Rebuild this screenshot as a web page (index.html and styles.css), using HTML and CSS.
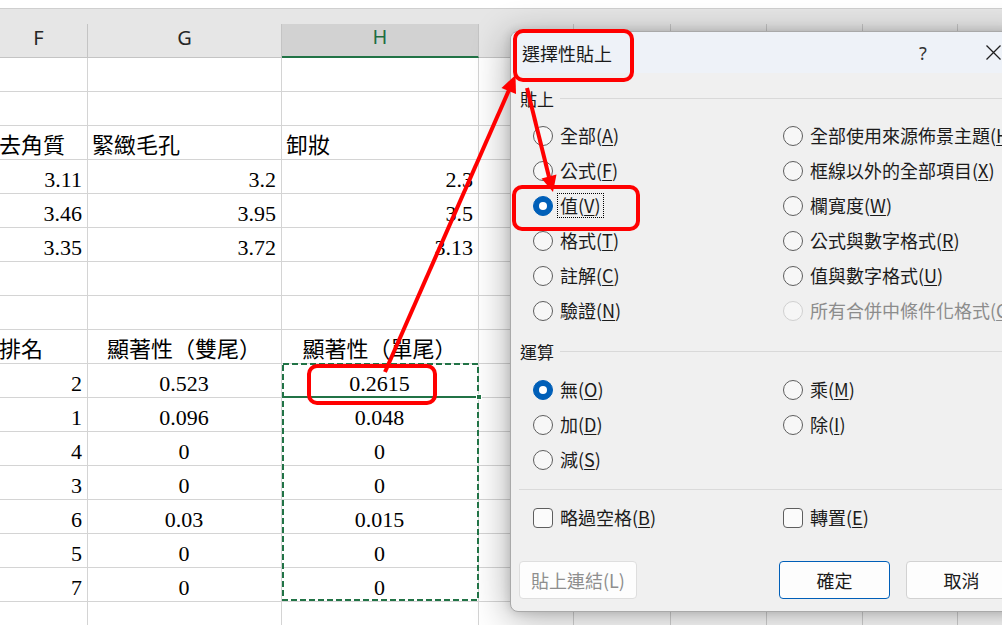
FILE: index.html
```html
<!DOCTYPE html>
<html lang="zh-Hant">
<head>
<meta charset="utf-8">
<title>選擇性貼上</title>
<link rel="stylesheet" href="styles.css">
</head>
<body>
<div class="screen">
  <div class="sheet">
    <div class="topgap"></div>
    <div class="strip"></div>
    <div class="row hdr"><div>F</div><div>G</div><div class="sel">H</div><div>I</div><div>J</div><div>K</div><div>L</div><div>M</div><div>N</div></div>
    <div class="row cells"><div></div><div></div><div></div><i></i><i></i><i></i><i></i><i></i><i></i></div>
    <div class="row cells"><div></div><div></div><div></div><i></i><i></i><i></i><i></i><i></i><i></i></div>
    <div class="row cells"><div class="l">去角質</div><div class="l">緊緻毛孔</div><div class="l">卸妝</div><i></i><i></i><i></i><i></i><i></i><i></i></div>
    <div class="row cells"><div class="r">3.11</div><div class="r">3.2</div><div class="r">2.3</div><i></i><i></i><i></i><i></i><i></i><i></i></div>
    <div class="row cells"><div class="r">3.46</div><div class="r">3.95</div><div class="r">3.5</div><i></i><i></i><i></i><i></i><i></i><i></i></div>
    <div class="row cells"><div class="r">3.35</div><div class="r">3.72</div><div class="r">3.13</div><i></i><i></i><i></i><i></i><i></i><i></i></div>
    <div class="row cells"><div></div><div></div><div></div><i></i><i></i><i></i><i></i><i></i><i></i></div>
    <div class="row cells"><div></div><div></div><div></div><i></i><i></i><i></i><i></i><i></i><i></i></div>
    <div class="row cells"><div class="l">排名</div><div class="c">顯著性（雙尾）</div><div class="c">顯著性（單尾）</div><i></i><i></i><i></i><i></i><i></i><i></i></div>
    <div class="row cells"><div class="r">2</div><div class="c">0.523</div><div class="c">0.2615</div><i></i><i></i><i></i><i></i><i></i><i></i></div>
    <div class="row cells"><div class="r">1</div><div class="c">0.096</div><div class="c">0.048</div><i></i><i></i><i></i><i></i><i></i><i></i></div>
    <div class="row cells"><div class="r">4</div><div class="c">0</div><div class="c">0</div><i></i><i></i><i></i><i></i><i></i><i></i></div>
    <div class="row cells"><div class="r">3</div><div class="c">0</div><div class="c">0</div><i></i><i></i><i></i><i></i><i></i><i></i></div>
    <div class="row cells"><div class="r">6</div><div class="c">0.03</div><div class="c">0.015</div><i></i><i></i><i></i><i></i><i></i><i></i></div>
    <div class="row cells"><div class="r">5</div><div class="c">0</div><div class="c">0</div><i></i><i></i><i></i><i></i><i></i><i></i></div>
    <div class="row cells"><div class="r">7</div><div class="c">0</div><div class="c">0</div><i></i><i></i><i></i><i></i><i></i><i></i></div>
    <div class="row cells"><div></div><div></div><div></div><i></i><i></i><i></i><i></i><i></i><i></i></div>
  </div>

  <div class="dialog">
    <div class="titlebar">
      <span class="title">選擇性貼上</span>
      <span class="help">?</span>
      <svg class="close" viewBox="0 0 15 15"><path d="M0.5 0.5 L14.5 14.5 M14.5 0.5 L0.5 14.5" stroke="#1f1f1f" stroke-width="1.3" fill="none"/></svg>
    </div>
    <div class="content">
      <div class="group">貼上</div>
      <div class="opts">
        <label class="opt"><span class="radio"></span><span class="t">全部(<u>A</u>)</span></label>
        <label class="opt"><span class="radio"></span><span class="t">全部使用來源佈景主題(<u>H</u>)</span></label>
        <label class="opt"><span class="radio"></span><span class="t">公式(<u>F</u>)</span></label>
        <label class="opt"><span class="radio"></span><span class="t">框線以外的全部項目(<u>X</u>)</span></label>
        <label class="opt"><span class="radio on"></span><span class="t focus">值(<u>V</u>)</span></label>
        <label class="opt"><span class="radio"></span><span class="t">欄寬度(<u>W</u>)</span></label>
        <label class="opt"><span class="radio"></span><span class="t">格式(<u>T</u>)</span></label>
        <label class="opt"><span class="radio"></span><span class="t">公式與數字格式(<u>R</u>)</span></label>
        <label class="opt"><span class="radio"></span><span class="t">註解(<u>C</u>)</span></label>
        <label class="opt"><span class="radio"></span><span class="t">值與數字格式(<u>U</u>)</span></label>
        <label class="opt"><span class="radio"></span><span class="t">驗證(<u>N</u>)</span></label>
        <label class="opt dis"><span class="radio"></span><span class="t">所有合併中條件化格式(<u>G</u>)</span></label>
      </div>
      <div class="group g2">運算</div>
      <div class="opts ops">
        <label class="opt"><span class="radio on"></span><span class="t">無(<u>O</u>)</span></label>
        <label class="opt"><span class="radio"></span><span class="t">乘(<u>M</u>)</span></label>
        <label class="opt"><span class="radio"></span><span class="t">加(<u>D</u>)</span></label>
        <label class="opt"><span class="radio"></span><span class="t">除(<u>I</u>)</span></label>
        <label class="opt"><span class="radio"></span><span class="t">減(<u>S</u>)</span></label>
      </div>
      <div class="sep"></div>
      <div class="opts checks">
        <label class="opt"><span class="check"></span><span class="t">略過空格(<u>B</u>)</span></label>
        <label class="opt"><span class="check"></span><span class="t">轉置(<u>E</u>)</span></label>
      </div>
      <div class="buttons">
        <span class="btn link">貼上連結(L)</span>
        <span class="btn ok">確定</span>
        <span class="btn cancel">取消</span>
      </div>
    </div>
  </div>

  <svg class="annot" viewBox="0 0 1002 625" width="1002" height="625">
    <rect x="283" y="364" width="195" height="236" fill="none" stroke="#217346" stroke-width="2" stroke-dasharray="6 3"/>
    <line x1="282" y1="397" x2="479" y2="397" stroke="#217346" stroke-width="2"/>
    <rect x="476.5" y="394.5" width="5" height="5" fill="#217346" stroke="#fff" stroke-width="1"/>
    <g fill="none" stroke="#ff0000" stroke-width="4">
      <rect x="515" y="31" width="117" height="49" rx="8"/>
      <rect x="514" y="187" width="124" height="42" rx="8"/>
      <rect x="309" y="366" width="126" height="37" rx="8"/>
      <line x1="385" y1="372" x2="509" y2="90"/>
      <line x1="527" y1="88" x2="549" y2="177"/>
    </g>
    <g fill="#ff0000">
      <polygon points="515.5,75 516,94 501.5,88"/>
      <polygon points="553,192 556.5,174.5 541.5,178.5"/>
    </g>
  </svg>
</div>
</body>
</html>
```

FILE: styles.css
```css
body {
  margin: 0;
  background: #ffffff;
}

.screen {
  position: relative;
  width: 1002px;
  height: 625px;
  overflow: hidden;
  background: #ffffff;
}

/* ---------- spreadsheet ---------- */
.sheet {
  margin-left: -10px;
}

.topgap {
  height: 8px;
  background: #ffffff;
}

.strip {
  height: 16px;
  box-sizing: border-box;
  background: #e6e6e6;
  border-top: 1px solid #cfcfcf;
}

.row {
  display: grid;
  grid-template-columns: 98px 194px 197px 95px 97px 96px 96px 95px 100px;
}

.row > * {
  box-sizing: border-box;
  height: 34px;
  border-right: 1px solid #d4d4d4;
  border-bottom: 1px solid #d4d4d4;
}

.hdr > * {
  background: #e6e6e6;
  border-right-color: #c4c4c4;
  border-bottom-color: #c4c4c4;
  font-family: "Noto Sans", sans-serif;
  font-size: 20px;
  color: #262626;
  display: flex;
  align-items: center;
  justify-content: center;
  padding-bottom: 7px;
}

.hdr > .sel {
  background: #d2d2d2;
  color: #1e6e42;
  border-bottom: 2px solid #217346;
}

.cells > * {
  display: flex;
  align-items: flex-end;
  padding: 0 5px 2px 4px;
  font-family: "Liberation Serif", "Noto Sans CJK TC", serif;
  font-size: 22px;
  line-height: 22px;
  color: #000000;
  white-space: nowrap;
  overflow: hidden;
}

.cells > .l { justify-content: flex-start; }
.cells > .r { justify-content: flex-end; }
.cells > .c { justify-content: center; }

.cells > div:first-child.l { padding-left: 9px; }

/* ---------- dialog ---------- */
.dialog {
  position: absolute;
  left: 510px;
  top: 31px;
  width: 530px;
  height: 581px;
  box-sizing: border-box;
  border: 1px solid #a9a9a9;
  border-radius: 8px;
  background: #f0f0f0;
  box-shadow: -2px 6px 36px rgba(0, 0, 0, 0.32), 0 0 10px rgba(0, 0, 0, 0.14);
  overflow: hidden;
  font-family: "Noto Sans CJK TC", "Noto Sans", sans-serif;
  color: #1b1b1b;
  display: flex;
  flex-direction: column;
}

.titlebar {
  flex: none;
  height: 41px;
  background: #eef2f8;
  display: flex;
  align-items: center;
  padding: 0 38px 0 11px;
  font-size: 18px;
}

.title {
  flex: 1;
  color: #1a1a1a;
}

.help {
  width: 20px;
  text-align: center;
  font-family: "Noto Sans", sans-serif;
  font-size: 18px;
  color: #333333;
}

.close {
  margin-left: 53px;
  width: 15px;
  height: 15px;
  flex: none;
}

.content {
  display: flex;
  flex-direction: column;
  padding-left: 9px;
}

.group {
  display: flex;
  align-items: center;
  height: 24px;
  margin-top: 13px;
  font-size: 17px;
  white-space: nowrap;
}

.group::after {
  content: "";
  flex: 1;
  height: 1px;
  background: #d9d9d9;
  margin-left: 6px;
}

.group.g2 {
  margin-top: 11px;
}

.opts {
  display: grid;
  grid-template-columns: 250px 1fr;
  grid-auto-rows: 35px;
  padding-left: 13px;
  margin-top: 8px;
}

.opts.ops {
  margin-top: 9px;
}

.opts.checks {
  margin-top: 10px;
}

.opt {
  display: flex;
  align-items: center;
  gap: 5px;
  font-size: 18px;
  white-space: nowrap;
}

.opt .t {
  padding: 0 2px;
  line-height: 23px;
}

.opt .t.focus {
  outline: 1px dotted #000000;
}

.opt u {
  text-underline-offset: 2px;
}

.radio {
  flex: none;
  width: 20px;
  height: 20px;
  box-sizing: border-box;
  border: 1px solid #5e5e5e;
  border-radius: 50%;
  background: #f7f7f7;
}

.radio.on {
  background: #005fb8;
  border-color: #005fb8;
  display: flex;
  align-items: center;
  justify-content: center;
}

.radio.on::after {
  content: "";
  width: 8px;
  height: 8px;
  border-radius: 50%;
  background: #ffffff;
}

.opt.dis {
  color: #8c8c8c;
}

.opt.dis .radio {
  border-color: #d0d0d0;
  background: #f6f6f6;
}

.check {
  flex: none;
  width: 20px;
  height: 20px;
  box-sizing: border-box;
  border: 1px solid #5e5e5e;
  border-radius: 4px;
  background: #fbfbfb;
}

.sep {
  height: 1px;
  background: #dadada;
  margin-top: 12px;
  margin-left: -1px;
}

.buttons {
  display: flex;
  margin-top: 26px;
  margin-left: -1px;
}

.btn {
  flex: none;
  height: 38px;
  box-sizing: border-box;
  border: 1px solid #d2d2d2;
  border-radius: 4px;
  background: #fdfdfd;
  font-size: 18px;
  display: flex;
  align-items: center;
  justify-content: center;
}

.btn.link {
  width: 118px;
  color: #8e8e8e;
  border-color: #dedede;
}

.btn.ok {
  width: 111px;
  margin-left: 142px;
  border-color: #005fb8;
}

.btn.cancel {
  width: 111px;
  margin-left: 16px;
}

/* ---------- annotation overlay ---------- */
.annot {
  position: absolute;
  left: 0;
  top: 0;
  pointer-events: none;
}
```
